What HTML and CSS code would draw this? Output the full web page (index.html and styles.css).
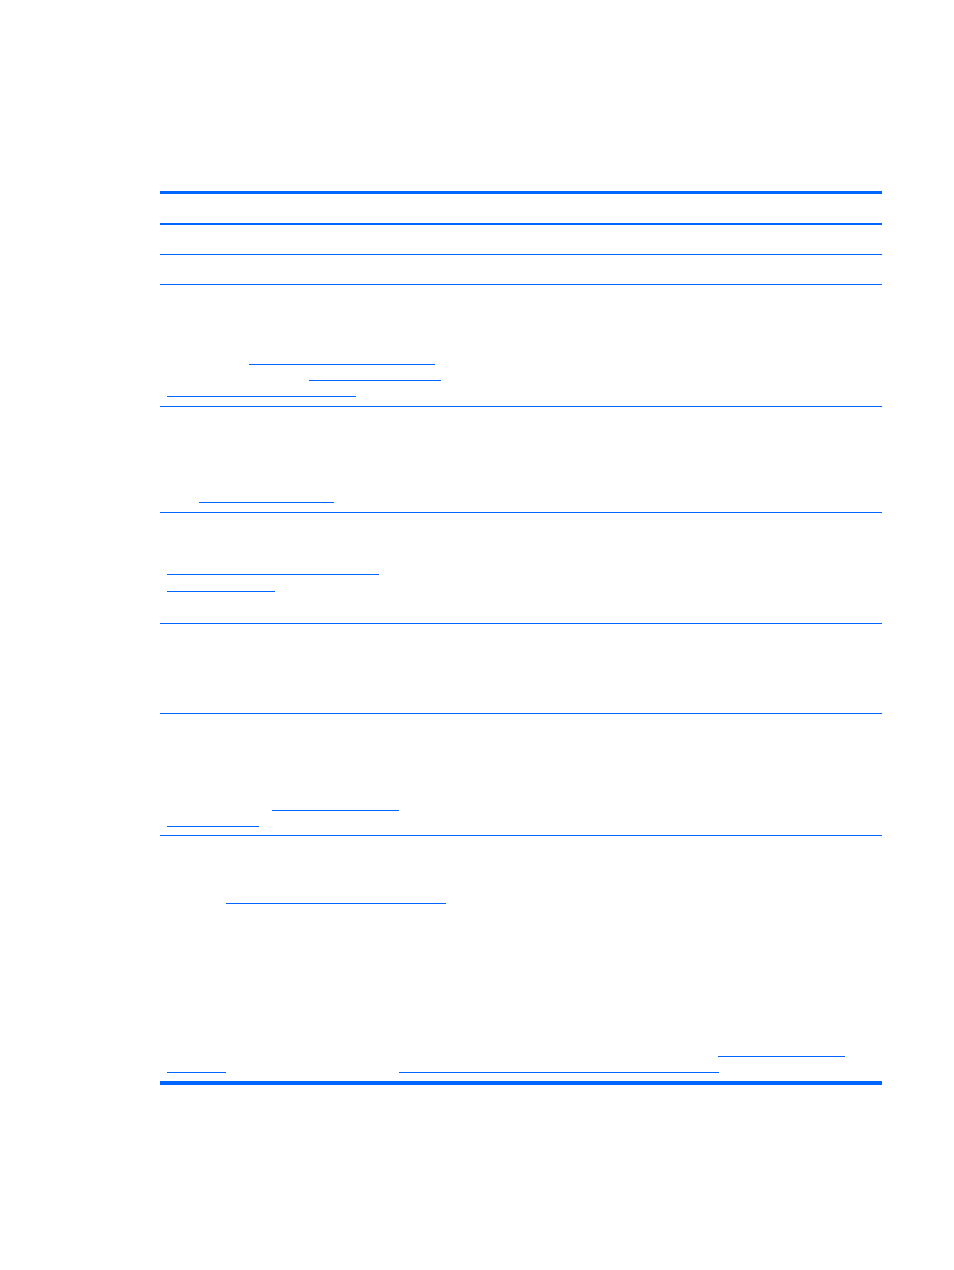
FILE: index.html
```html
<!DOCTYPE html>
<html lang="en">
<head>
<meta charset="utf-8">
<title>Table</title>
<link rel="stylesheet" href="styles.css">
</head>
<body>
<div class="page">
  <div class="table">
    <div class="row r1"></div>
    <div class="row r2"></div>
    <div class="row r3"></div>
    <div class="row r4">
      <div class="ln m64"><span class="u l89 w186"></span></div>
      <div class="ln"><span class="u l149 w132"></span></div>
      <div class="ln"><span class="u l7 w189"></span></div>
    </div>
    <div class="row r5">
      <div class="ln m80"><span class="u l39 w135"></span></div>
    </div>
    <div class="row r6">
      <div class="ln m46"><span class="u l7 w212"></span></div>
      <div class="ln m1"><span class="u l7 w108"></span></div>
    </div>
    <div class="row r7"></div>
    <div class="row r8">
      <div class="ln m81"><span class="u l112 w127"></span></div>
      <div class="ln"><span class="u l7 w92"></span></div>
    </div>
    <div class="row r9">
      <div class="ln m52"><span class="u l66 w220"></span></div>
      <div class="ln m137"><span class="u l558 w127"></span></div>
      <div class="ln"><span class="u l7 w59"></span><span class="u l173 w320"></span></div>
    </div>
  </div>
</div>
</body>
</html>
```

FILE: styles.css
```css
html, body {
  margin: 0;
  padding: 0;
  background: #ffffff;
  font-family: "Liberation Sans", Arial, sans-serif;
}

.page {
  padding-top: 191px;
  padding-left: 160px;
}

.table {
  width: 722px;
  border-top: 3px solid #0066ff;
  border-bottom: 4px solid #0066ff;
}

.row {
  display: flex;
  flex-direction: column;
  border-bottom: 1px solid #0066ff;
  box-sizing: content-box;
}

.row:last-child { border-bottom: none; }

.r1 { height: 29px; border-bottom-width: 2px; }
.r2 { height: 29px; }
.r3 { height: 29px; }
.r4 { height: 121px; }
.r5 { height: 105px; }
.r6 { height: 110px; }
.r7 { height: 89px; }
.r8 { height: 121px; }
.r9 { height: 245px; }

.ln {
  display: flex;
  align-items: flex-end;
  height: 16px;
  flex: none;
}

.u {
  display: block;
  height: 1px;
  background: #0066ff;
  flex: none;
}

.m1 { margin-top: 1px; }
.m46 { margin-top: 46px; }
.m52 { margin-top: 52px; }
.m64 { margin-top: 64px; }
.m80 { margin-top: 80px; }
.m81 { margin-top: 81px; }
.m137 { margin-top: 137px; }

.l7 { margin-left: 7px; }
.l39 { margin-left: 39px; }
.l66 { margin-left: 66px; }
.l89 { margin-left: 89px; }
.l112 { margin-left: 112px; }
.l149 { margin-left: 149px; }
.l173 { margin-left: 173px; }
.l558 { margin-left: 558px; }

.w59 { width: 59px; }
.w92 { width: 92px; }
.w108 { width: 108px; }
.w127 { width: 127px; }
.w132 { width: 132px; }
.w135 { width: 135px; }
.w186 { width: 186px; }
.w189 { width: 189px; }
.w212 { width: 212px; }
.w220 { width: 220px; }
.w320 { width: 320px; }
```
